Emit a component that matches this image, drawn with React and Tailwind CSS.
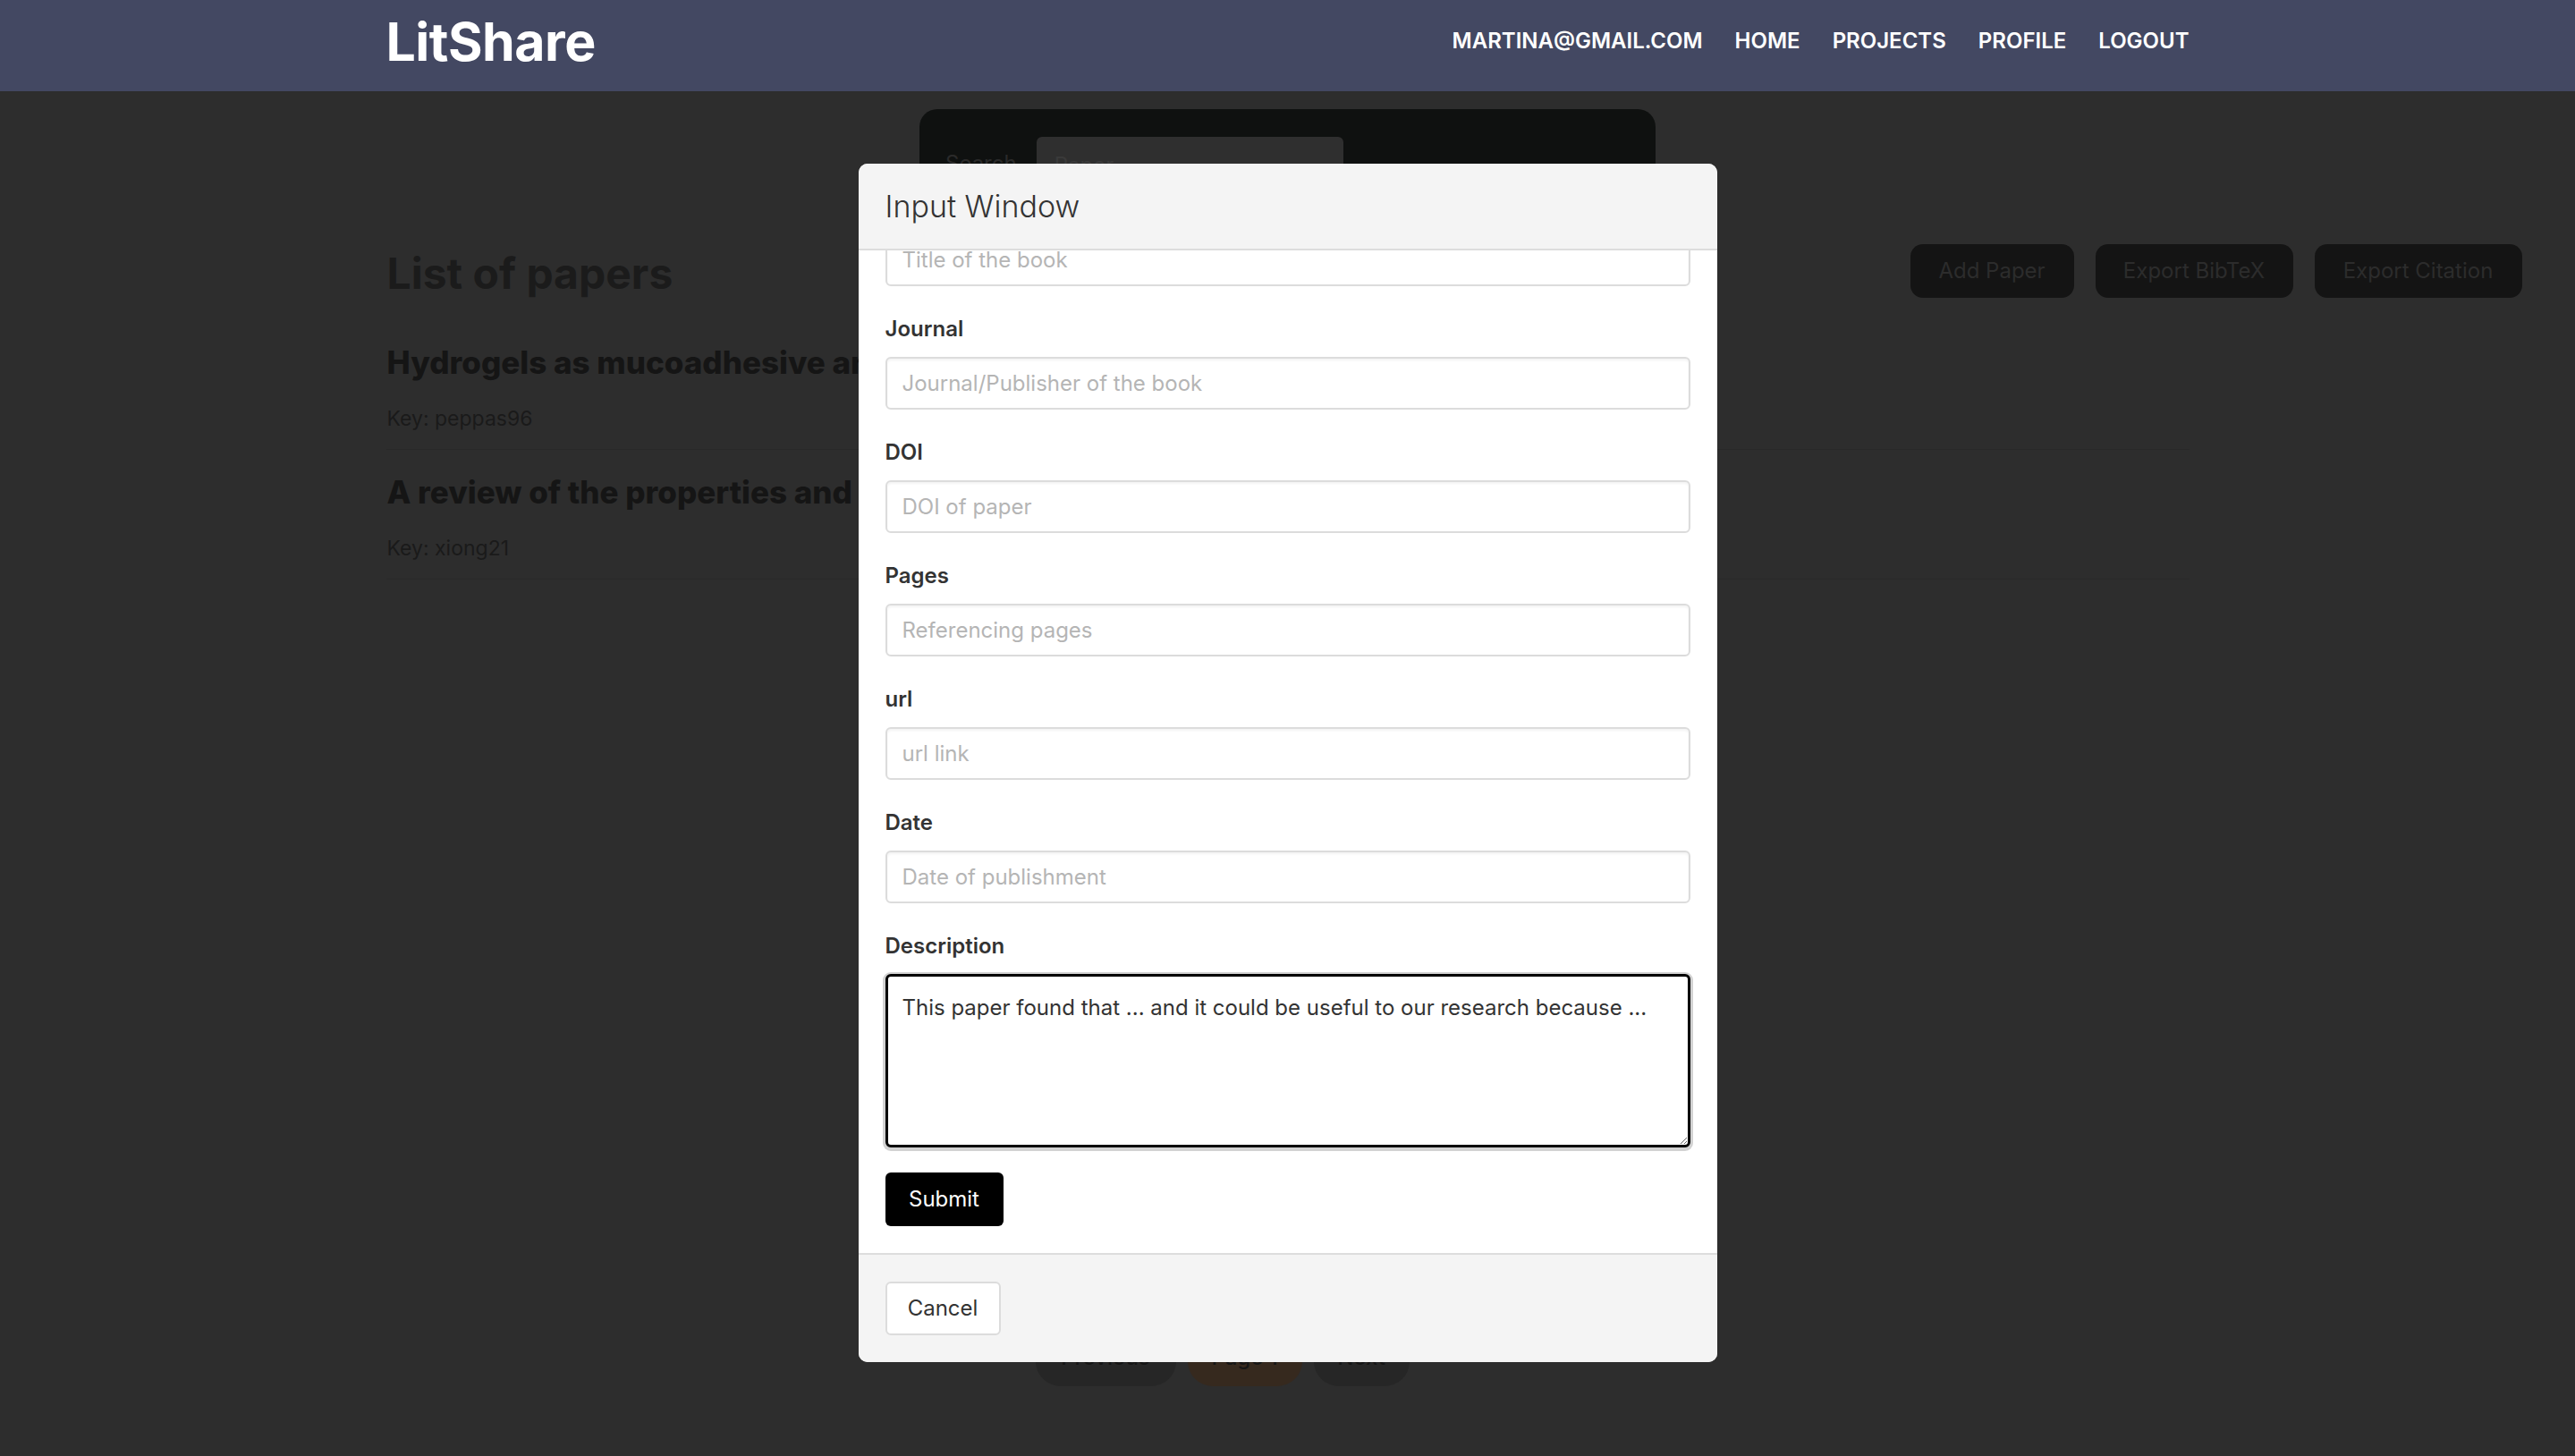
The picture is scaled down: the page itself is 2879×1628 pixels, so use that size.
import React from "react";

const font = { fontFamily: "Inter, 'Noto Sans', 'Liberation Sans', sans-serif" };

function Field({ label, placeholder }) {
  return (
    <div className="mb-[30px]">
      <div className="text-[24px] leading-[36px] font-semibold text-[#333]">{label}</div>
      <input
        type="text"
        placeholder={placeholder}
        className="mt-[13px] block w-full h-[59px] rounded-[6px] border-2 border-[#dcdcdc] bg-white px-[17px] text-[24px] text-[#333] placeholder:text-[#b5b5b5] shadow-[inset_0_2px_3px_rgba(0,0,0,0.05)] outline-none"
      />
    </div>
  );
}

export default function App() {
  const papers = [
    { title: "Hydrogels as mucoadhesive and bioadhesive materials: a review", key: "peppas96" },
    { title: "A review of the properties and applications of hydrogels", key: "xiong21" },
  ];
  return (
    <div className="relative h-screen w-full overflow-hidden bg-[#2d2d2d]" style={font}>
      {/* Navbar */}
      <header className="h-[102px] w-full bg-[#434862]">
        <div className="mx-auto flex h-full w-[2016px] items-start justify-between">
          <div className="mt-[17px] text-[59px] font-bold leading-none tracking-[-0.5px] text-white">LitShare</div>
          <nav className="mt-[34px] flex gap-[36px] text-[24px] font-semibold leading-none text-white">
            <span>MARTINA@GMAIL.COM</span>
            <span>HOME</span>
            <span>PROJECTS</span>
            <span>PROFILE</span>
            <span>LOGOUT</span>
          </nav>
        </div>
      </header>

      <main className="mx-auto w-[2016px]">
        <div className="mx-auto mt-[20px] h-[128px] w-[823px] rounded-[20px] bg-[#0f1110] pl-[29px] pt-[31px]">
          <div className="flex items-start gap-[22px]">
            <span className="mt-[12px] text-[24px] leading-[36px] text-[#2a2a2a]">Search</span>
            <div className="h-[56px] w-[343px] rounded-[6px] bg-[#2f2f2f] pl-[20px] pt-[14px] text-[24px] leading-[36px] text-[#3a3a3a]">
              Paper
            </div>
          </div>
        </div>

        <div className="mt-[23px] flex h-[60px] w-[2388px] items-center justify-between">
          <h1 className="mt-[6px] pl-[1px] text-[48px] font-bold leading-none text-[#1b1b1b]">List of papers</h1>
          <div className="flex gap-[24px]">
            <div className="flex h-[60px] w-[183px] items-center justify-center rounded-[14px] bg-[#141414] text-[24px] text-[#2c2c2c]">Add Paper</div>
            <div className="flex h-[60px] w-[221px] items-center justify-center rounded-[14px] bg-[#141414] text-[24px] text-[#2c2c2c]">Export BibTeX</div>
            <div className="flex h-[60px] w-[232px] items-center justify-center rounded-[14px] bg-[#141414] text-[24px] text-[#2c2c2c]">Export Citation</div>
          </div>
        </div>

        <ul className="mt-[25px]">
          {papers.map((p) => (
            <li key={p.key} className="border-b border-[#292929] pb-[17px] pt-[22px] pl-[1px]">
              <div className="whitespace-nowrap text-[35px] font-extrabold leading-[51px] text-[#151515]">{p.title}</div>
              <div className="mt-[21px] text-[23px] leading-[33px] text-[#1a1a1a]">Key: {p.key}</div>
            </li>
          ))}
        </ul>

        <div className="ml-[726px] mt-[838px] flex gap-[13px] text-[24px] font-medium text-[#151515]">
          <div className="flex h-[64px] w-[157px] items-center justify-center rounded-[28px] bg-[#262626]">Previous</div>
          <div className="flex h-[64px] w-[128px] items-center justify-center rounded-[28px] bg-[#36291e]">Page 1</div>
          <div className="flex h-[64px] w-[107px] items-center justify-center rounded-[28px] bg-[#262626]">Next</div>
        </div>
      </main>

      {/* Modal */}
      <div className="absolute inset-x-0 top-0 flex justify-center pt-[183px]">
        <div className="flex w-[960px] flex-col overflow-hidden rounded-[10px] bg-white">
          <div className="flex h-[97px] items-center border-b-2 border-[#dddddd] bg-[#f4f4f4] px-[30px]">
            <h2 className="text-[34px] font-light leading-none text-[#333]">Input Window</h2>
          </div>
          <div className="flex h-[1121px] flex-col justify-end overflow-hidden">
            <div className="px-[30px] pb-[30px] pt-[30px]">
              <Field label="Key" placeholder="Unique key of the paper" />
              <Field label="Authors" placeholder="Authors of the paper" />
              <Field label="Title" placeholder="Title of the book" />
              <Field label="Journal" placeholder="Journal/Publisher of the book" />
              <Field label="DOI" placeholder="DOI of paper" />
              <Field label="Pages" placeholder="Referencing pages" />
              <Field label="url" placeholder="url link" />
              <Field label="Date" placeholder="Date of publishment" />
              <div className="mb-[28px]">
                <div className="text-[24px] leading-[36px] font-semibold text-[#333]">Description</div>
                <textarea
                  defaultValue="This paper found that ... and it could be useful to our research because ..."
                  className="mt-[13px] block h-[194px] w-full resize-y rounded-[6px] border-[3px] border-black bg-white px-[16px] pt-[17px] text-[24px] leading-[36px] text-[#333] shadow-[0_1px_0_3px_#d2d2d2] outline-none"
                />
              </div>
              <button className="h-[60px] w-[132px] rounded-[6px] bg-black text-[24px] text-white">Submit</button>
            </div>
          </div>
          <div className="border-t-2 border-[#dddddd] bg-[#f4f4f4] px-[30px] py-[30px]">
            <button className="h-[60px] w-[129px] rounded-[6px] border-2 border-[#dcdcdc] bg-white text-[24px] text-[#333]">Cancel</button>
          </div>
        </div>
      </div>
    </div>
  );
}
